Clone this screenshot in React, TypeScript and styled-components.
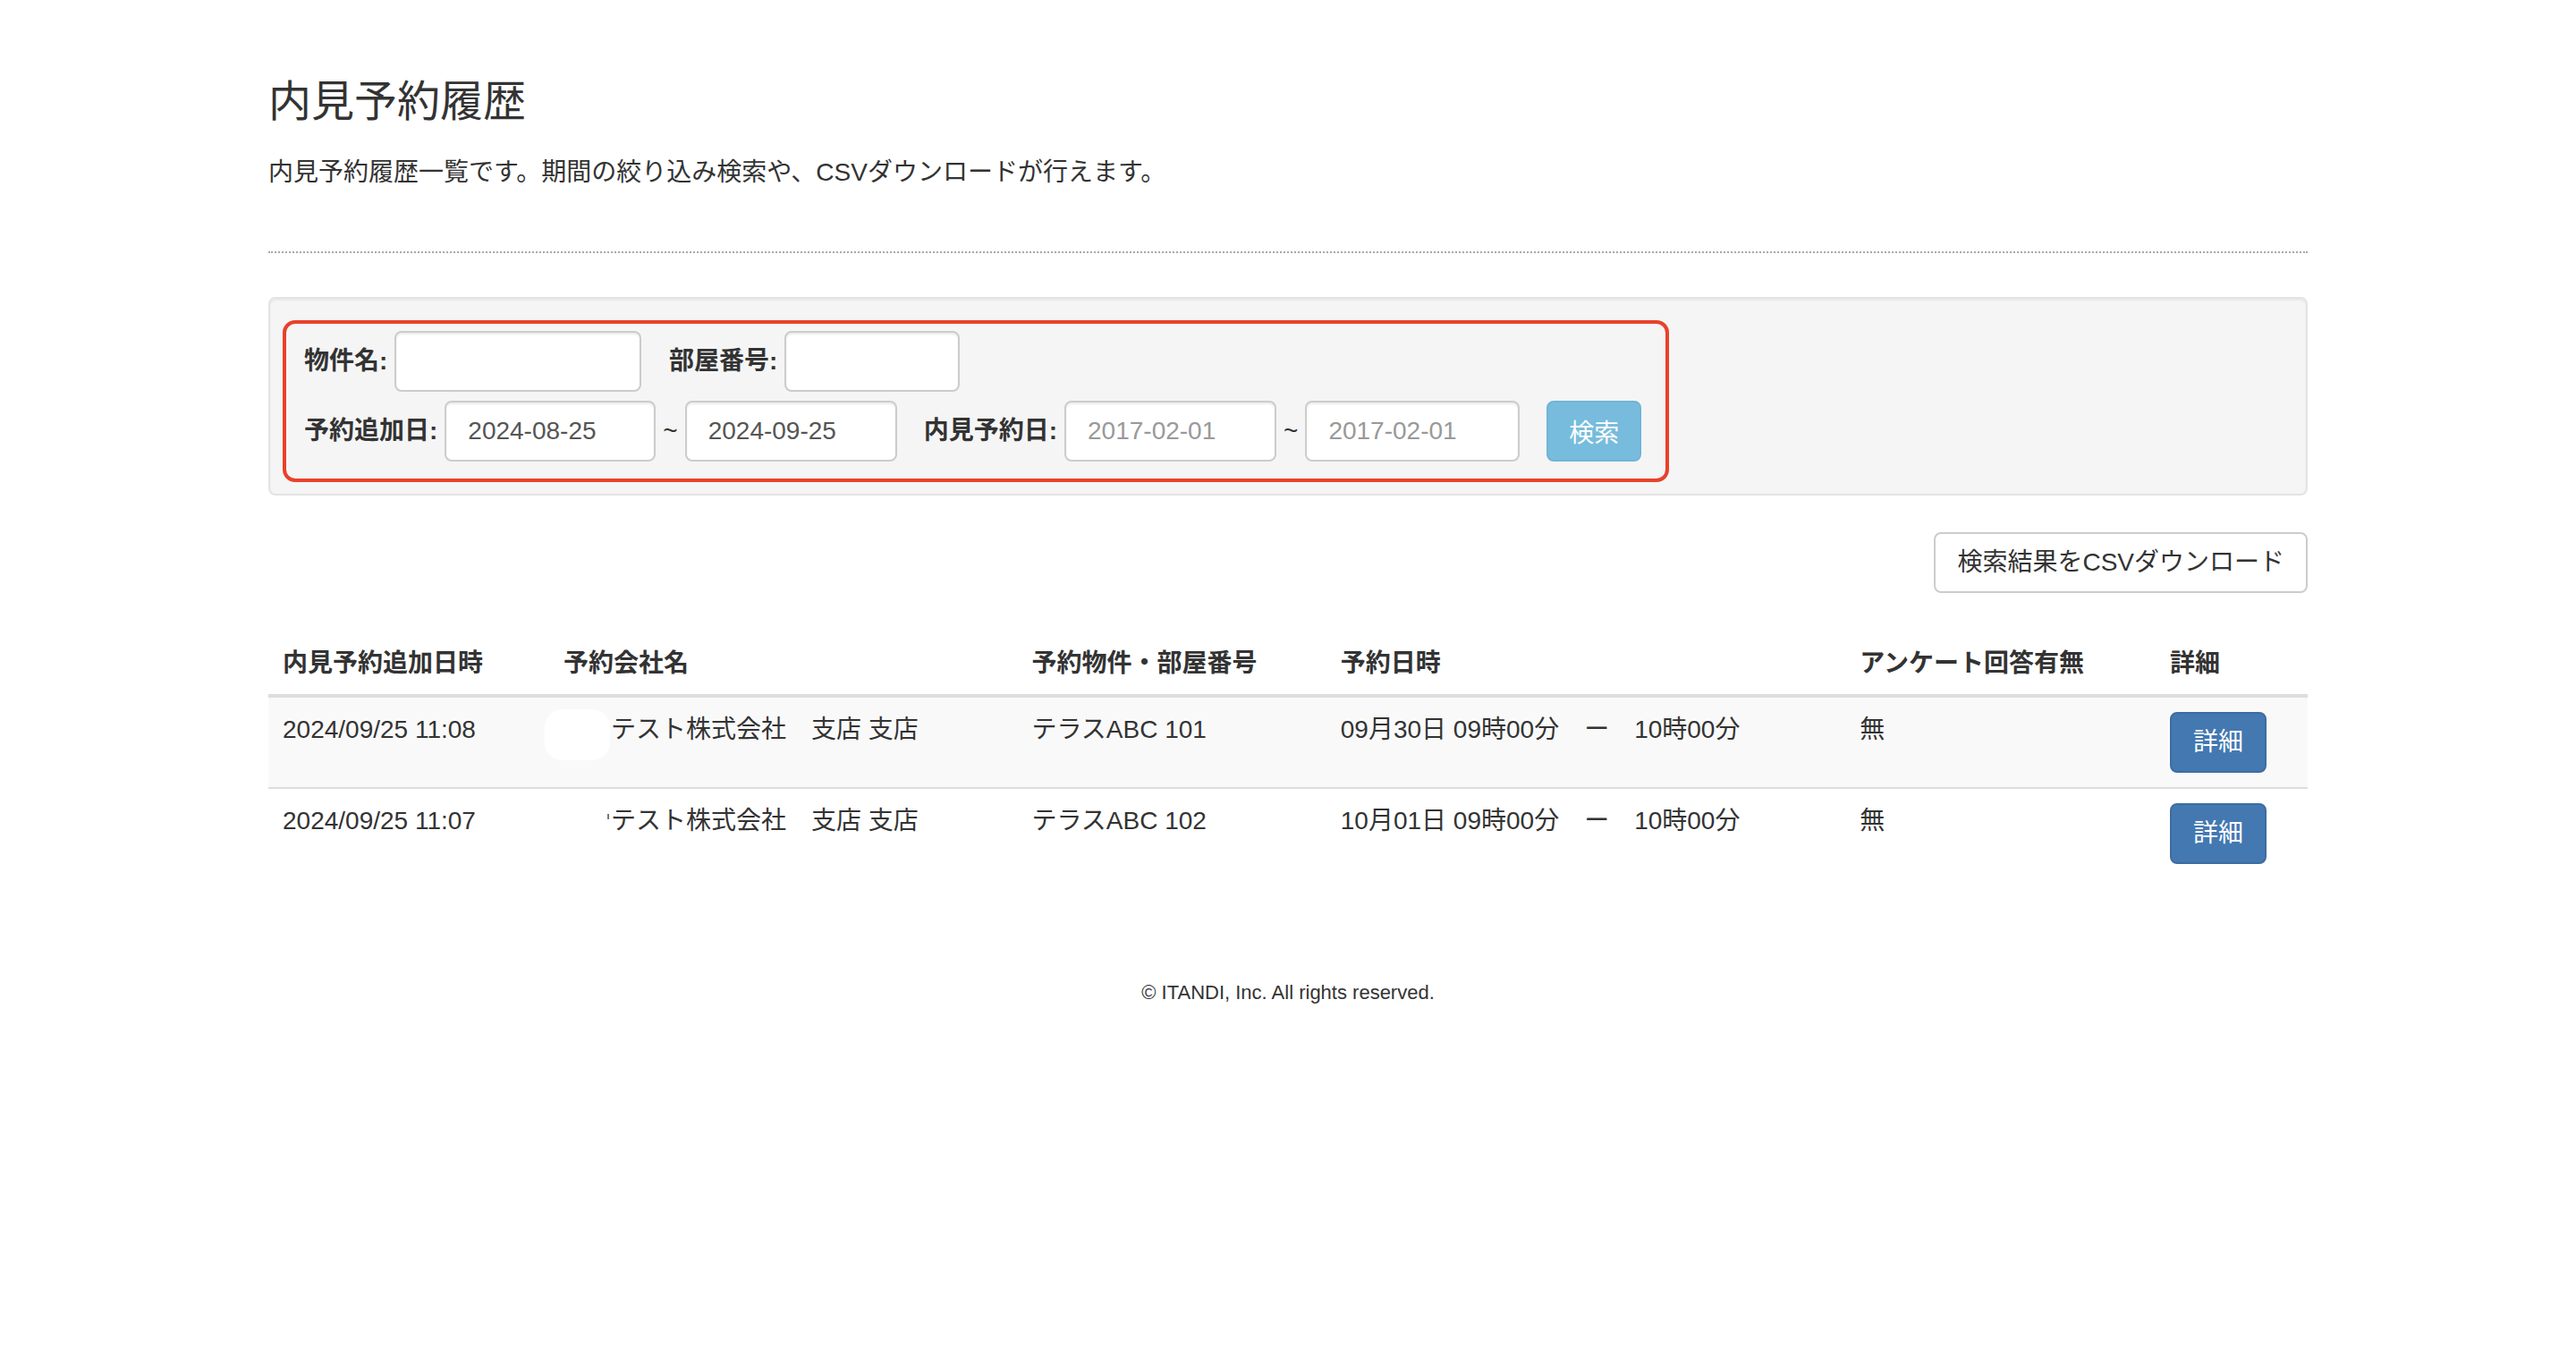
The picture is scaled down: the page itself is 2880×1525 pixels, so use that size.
import React from "react";
import styled, { createGlobalStyle } from "styled-components";

const GlobalStyle = createGlobalStyle`
  html, body { margin: 0; padding: 0; background: #fff; }
  body {
    font-family: "Liberation Sans", "Noto Sans CJK JP", Arial, sans-serif;
    font-size: 14px;
    line-height: 1.42857;
    color: #333;
  }
  * { box-sizing: border-box; }
`;

const Page = styled.div`
  zoom: 2;
  min-height: 762px;
`;

const Container = styled.div`
  width: 1140px;
  margin: 0 auto;
  padding-top: 44px;
`;

const Title = styled.h3`
  margin: 0;
  font-size: 24px;
  line-height: 1.1;
  font-weight: 400;
  color: #333;
`;

const Lead = styled.p`
  margin: 16px 0 0;
  line-height: 20px;
`;

const Divider = styled.hr`
  margin: 34px 0 0;
  height: 0;
  border: 0;
  border-top: 1px dotted #a9a9a9;
`;

const Well = styled.div`
  margin-top: 24.5px;
  padding: 12px 7px 6.5px;
  background: #f5f5f5;
  border: 1px solid #e3e3e3;
  border-radius: 4px;
  box-shadow: inset 0 1px 1px rgba(0, 0, 0, 0.05);
`;

const Highlight = styled.div`
  width: 775px;
  border: 2px solid #e9412b;
  border-radius: 7px;
  padding: 4px 0 9.5px 10px;
`;

const FormRow = styled.div`
  display: flex;
  align-items: center;
  height: 34px;
  & + & {
    margin-top: 5px;
  }
`;

const FieldLabel = styled.label<{ $lead?: number }>`
  font-weight: 700;
  white-space: nowrap;
  margin-right: 4px;
  margin-left: ${(p) => p.$lead ?? 0}px;
`;

const TextInput = styled.input<{ $w: number }>`
  width: ${(p) => p.$w}px;
  height: 34px;
  padding: 6px 12px;
  border: 1px solid #ccc;
  border-radius: 4px;
  background: #fff;
  font-family: inherit;
  font-size: 14px;
  line-height: 20px;
  color: #555;
  box-shadow: inset 0 1px 1px rgba(0, 0, 0, 0.075);
  outline: none;
  &::placeholder {
    color: #999;
  }
`;

const Tilde = styled.span`
  margin: 0 4px;
`;

const SearchButton = styled.button`
  margin-left: 15px;
  width: 53px;
  height: 34px;
  padding: 0;
  background: #77bcdc;
  border: 1px solid #6fb5d6;
  border-radius: 4px;
  color: #fff;
  font-family: inherit;
  font-size: 14px;
`;

const Toolbar = styled.div`
  display: flex;
  justify-content: flex-end;
  margin-top: 20.5px;
`;

const CsvButton = styled.button`
  height: 34px;
  padding: 6px 12px;
  background: #fff;
  border: 1px solid #ccc;
  border-radius: 4px;
  color: #333;
  font-family: inherit;
  font-size: 14px;
  line-height: 20px;
`;

const Table = styled.table`
  width: 100%;
  margin-top: 20.5px;
  border-collapse: collapse;
  table-layout: fixed;
`;

const HeadCell = styled.th`
  padding: 9px 8px 7px;
  text-align: left;
  font-weight: 700;
  line-height: 20px;
  vertical-align: bottom;
  border-bottom: 2px solid #ddd;
  white-space: nowrap;
`;

const Row = styled.tr<{ $striped?: boolean }>`
  background: ${(p) => (p.$striped ? "#f9f9f9" : "transparent")};
`;

const Cell = styled.td`
  padding: 8px;
  line-height: 20px;
  vertical-align: top;
  border-top: 1px solid #ddd;
  white-space: nowrap;
`;

const Mask = styled.span<{ $kind: "blob" | "tick" }>`
  position: relative;
  display: inline-block;
  width: 26.5px;
  height: 20px;
  vertical-align: top;
  &::before {
    content: "";
    position: absolute;
    ${(p) =>
      p.$kind === "blob"
        ? `left: -10.5px; top: -1.5px; width: 36.5px; height: 28.5px; border-radius: 10px; background: #fff;`
        : `left: 24.5px; top: 6px; width: 1px; height: 3px; background: #777;`}
  }
`;

const DetailButton = styled.button`
  height: 34px;
  padding: 6px 12px;
  background: #4478b1;
  border: 1px solid #3d6ca1;
  border-radius: 4px;
  color: #fff;
  font-family: inherit;
  font-size: 14px;
  line-height: 20px;
`;

const Footer = styled.footer`
  margin-top: 56px;
  text-align: center;
  font-size: 11px;
  line-height: 16px;
  color: #333;
`;

const columns = [157, 261.7, 172.7, 290.2, 173.4, 85];

const rows = [
  {
    added: "2024/09/25 11:08",
    mask: "blob" as const,
    company: "テスト株式会社　支店 支店",
    property: "テラスABC 101",
    when: "09月30日 09時00分　ー　10時00分",
    survey: "無",
  },
  {
    added: "2024/09/25 11:07",
    mask: "tick" as const,
    company: "テスト株式会社　支店 支店",
    property: "テラスABC 102",
    when: "10月01日 09時00分　ー　10時00分",
    survey: "無",
  },
];

export default function App() {
  return (
    <Page>
      <GlobalStyle />
      <Container>
        <Title>内見予約履歴</Title>
        <Lead>内見予約履歴一覧です。期間の絞り込み検索や、CSVダウンロードが行えます。</Lead>
        <Divider />
        <Well>
          <Highlight>
            <FormRow>
              <FieldLabel>物件名:</FieldLabel>
              <TextInput $w={138} type="text" />
              <FieldLabel $lead={15.3}>部屋番号:</FieldLabel>
              <TextInput $w={98} type="text" />
            </FormRow>
            <FormRow>
              <FieldLabel>予約追加日:</FieldLabel>
              <TextInput $w={118} type="text" defaultValue="2024-08-25" />
              <Tilde>~</Tilde>
              <TextInput $w={118.5} type="text" defaultValue="2024-09-25" />
              <FieldLabel $lead={15}>内見予約日:</FieldLabel>
              <TextInput $w={118.5} type="text" placeholder="2017-02-01" />
              <Tilde>~</Tilde>
              <TextInput $w={120} type="text" placeholder="2017-02-01" />
              <SearchButton type="button">検索</SearchButton>
            </FormRow>
          </Highlight>
        </Well>
        <Toolbar>
          <CsvButton type="button">検索結果をCSVダウンロード</CsvButton>
        </Toolbar>
        <Table>
          <colgroup>
            {columns.map((w, i) => (
              <col key={i} style={{ width: `${w}px` }} />
            ))}
          </colgroup>
          <thead>
            <tr>
              <HeadCell>内見予約追加日時</HeadCell>
              <HeadCell>予約会社名</HeadCell>
              <HeadCell>予約物件・部屋番号</HeadCell>
              <HeadCell>予約日時</HeadCell>
              <HeadCell>アンケート回答有無</HeadCell>
              <HeadCell>詳細</HeadCell>
            </tr>
          </thead>
          <tbody>
            {rows.map((r, i) => (
              <Row key={r.added} $striped={i % 2 === 0}>
                <Cell>{r.added}</Cell>
                <Cell>
                  <Mask $kind={r.mask} />
                  {r.company}
                </Cell>
                <Cell>{r.property}</Cell>
                <Cell>{r.when}</Cell>
                <Cell>{r.survey}</Cell>
                <Cell>
                  <DetailButton type="button">詳細</DetailButton>
                </Cell>
              </Row>
            ))}
          </tbody>
        </Table>
        <Footer>© ITANDI, Inc. All rights reserved.</Footer>
      </Container>
    </Page>
  );
}
